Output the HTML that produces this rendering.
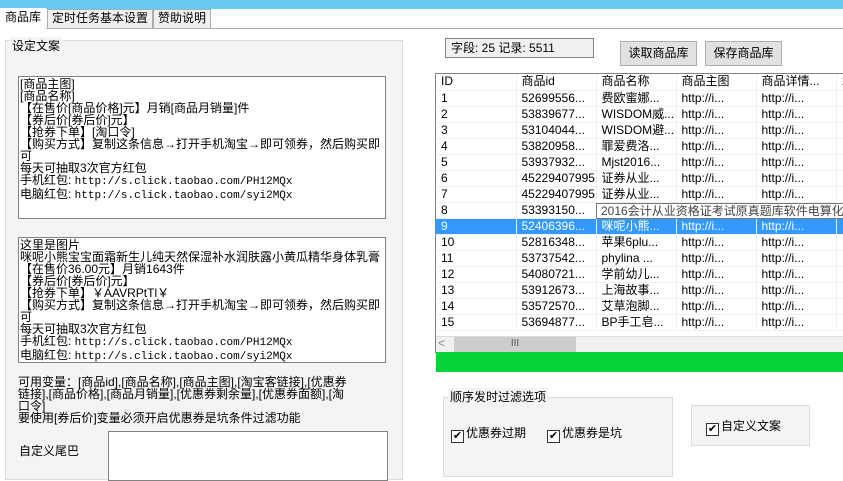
<!DOCTYPE html>
<html><head><meta charset="utf-8"><style>
*{margin:0;padding:0;box-sizing:border-box}
body{width:843px;height:474px;overflow:hidden;background:#fff;font-family:"Liberation Sans","Noto Sans CJK SC",sans-serif;font-size:12px;color:#000;position:relative}
.a{position:absolute}
.tb{top:9px;height:19px;border:1px solid #adadad;border-bottom:none;background:#f0f0f0;padding:0 4px;line-height:17px;font-size:12px}
.ta{background:#fff;border:1px solid #828282;line-height:12px;font-size:12px;padding:1px 1px;white-space:pre;overflow:hidden}
.m{font-family:"Liberation Mono",monospace;font-size:11px}
.btn{background:#e1e1e1;border:1px solid #adadad;text-align:center;line-height:23px;font-size:12px}
table{border-collapse:collapse;font-size:12px;table-layout:fixed;width:480px}
td{height:16px;width:80px;padding:0 0 0 5px;border-right:1px solid #f0f0f0;border-bottom:1px solid #f0f0f0;white-space:nowrap;overflow:hidden;line-height:15px}
.sel td{background:#3399ff;color:#fff}
.cb{display:inline-block;width:13px;height:13px;border:1px solid #333;background:#fff;font-size:11px;line-height:11px;text-align:center;vertical-align:-2px;margin-right:2px}
</style></head><body>
<div class="a" style="left:0;top:0;width:843px;height:9px;background:#6ac9ee"></div>
<div class="a" style="left:0;top:28px;width:843px;height:446px;background:#fff;border-top:1px solid #adadad"></div>
<div class="a tb" style="left:0;top:8px;height:21px;background:#fff;border-color:#fff">商品库</div>
<div class="a tb" style="left:47px">定时任务基本设置</div>
<div class="a tb" style="left:153px">赞助说明</div>

<div class="a" style="left:5px;top:40px;width:398px;height:440px;background:#f5f3f5;border:1px solid #dcdcdc"></div>
<div class="a" style="left:10px;top:37px;background:#f5f3f5;padding:0 2px">设定文案</div>
<div class="a ta" style="left:18px;top:76px;width:368px;height:143px">[商品主图]
[商品名称]
【在售价[商品价格]元】月销[商品月销量]件
【券后价[券后价]元】
【抢券下单】[淘口令]
【购买方式】复制这条信息→打开手机淘宝→即可领券，然后购买即
可
每天可抽取3次官方红包
手机红包: <span class="m">http://s.click.taobao.com/PH12MQx</span>
电脑红包: <span class="m">http://s.click.taobao.com/syi2MQx</span></div>
<div class="a ta" style="left:18px;top:237px;width:368px;height:126px">这里是图片
咪呢小熊宝宝面霜新生儿纯天然保湿补水润肤露小黄瓜精华身体乳膏
【在售价36.00元】月销1643件
【券后价[券后价]元】
【抢券下单】￥AAVRPtTl￥
【购买方式】复制这条信息→打开手机淘宝→即可领券，然后购买即
可
每天可抽取3次官方红包
手机红包: <span class="m">http://s.click.taobao.com/PH12MQx</span>
电脑红包: <span class="m">http://s.click.taobao.com/syi2MQx</span></div>
<div class="a" style="left:18px;top:376px;width:380px;line-height:12px;white-space:nowrap">可用变量：[商品id],[商品名称],[商品主图],[淘宝客链接],[优惠券<br>链接],[商品价格],[商品月销量],[优惠券剩余量],[优惠券面额],[淘<br>口令]<br>要使用[券后价]变量必须开启优惠券是坑条件过滤功能</div>
<div class="a" style="left:19px;top:442px">自定义尾巴</div>
<div class="a" style="left:108px;top:431px;width:280px;height:50px;background:#fff;border:1px solid #828282"></div>

<div class="a" style="left:445px;top:38px;width:149px;height:20px;border:1px solid #828282;background:#f0f0f0;padding-left:5px;line-height:18px">字段: 25 记录: 5511</div>
<div class="a btn" style="left:620px;top:41px;width:77px;height:25px">读取商品库</div>
<div class="a btn" style="left:705px;top:41px;width:77px;height:25px">保存商品库</div>

<div class="a" style="left:435px;top:73px;width:410px;height:280px;border:1px solid #828282;background:#fff;overflow:hidden">
<table>
<tr><td>ID</td><td>商品id</td><td>商品名称</td><td>商品主图</td><td>商品详情...</td><td>1</td></tr>
<tr><td>1</td><td>52699556...</td><td>费欧蜜娜...</td><td>http://i...</td><td>http://i...</td><td></td></tr>
<tr><td>2</td><td>53839677...</td><td>WISDOM威...</td><td>http://i...</td><td>http://i...</td><td></td></tr>
<tr><td>3</td><td>53104044...</td><td>WISDOM避...</td><td>http://i...</td><td>http://i...</td><td></td></tr>
<tr><td>4</td><td>53820958...</td><td>罪爱费洛...</td><td>http://i...</td><td>http://i...</td><td></td></tr>
<tr><td>5</td><td>53937932...</td><td>Mjst2016...</td><td>http://i...</td><td>http://i...</td><td></td></tr>
<tr><td>6</td><td>45229407995</td><td>证券从业...</td><td>http://i...</td><td>http://i...</td><td></td></tr>
<tr><td>7</td><td>45229407995</td><td>证券从业...</td><td>http://i...</td><td>http://i...</td><td></td></tr>
<tr><td>8</td><td>53393150...</td><td></td><td></td><td></td><td></td></tr>
<tr class="sel"><td>9</td><td>52406396...</td><td>咪呢小熊...</td><td>http://i...</td><td>http://i...</td><td></td></tr>
<tr><td>10</td><td>52816348...</td><td>苹果6plu...</td><td>http://i...</td><td>http://i...</td><td></td></tr>
<tr><td>11</td><td>53737542...</td><td>phylina ...</td><td>http://i...</td><td>http://i...</td><td></td></tr>
<tr><td>12</td><td>54080721...</td><td>学前幼儿...</td><td>http://i...</td><td>http://i...</td><td></td></tr>
<tr><td>13</td><td>53912673...</td><td>上海故事...</td><td>http://i...</td><td>http://i...</td><td></td></tr>
<tr><td>14</td><td>53572570...</td><td>艾草泡脚...</td><td>http://i...</td><td>http://i...</td><td></td></tr>
<tr><td>15</td><td>53694877...</td><td>BP手工皂...</td><td>http://i...</td><td>http://i...</td><td></td></tr>
</table>
<div class="a" style="left:0;top:262px;width:410px;height:17px;background:#f0f0f0;border-top:1px solid #ddd"></div>
<div class="a" style="left:2px;top:262px;color:#888">&lt;</div>
<div class="a" style="left:18px;top:263px;width:122px;height:15px;background:#cdcdcd;text-align:center;line-height:14px;font-size:10px;color:#555">III</div>
</div>
<div class="a" style="left:596px;top:203px;width:250px;height:16px;background:#fff;border:1px solid #767676;padding-left:4px;line-height:14px;color:#444;white-space:nowrap;overflow:hidden">2016会计从业资格证考试原真题库软件电算化</div>
<div class="a" style="left:436px;top:352px;width:407px;height:20px;background:#06d337"></div>

<div class="a" style="left:443px;top:397px;width:230px;height:80px;background:#f5f3f5;border:1px solid #dcdcdc"></div>
<div class="a" style="left:448px;top:388px;background:#f5f3f5;padding:0 2px">顺序发时过滤选项</div>
<div class="a" style="left:451px;top:424px"><span class="cb">✔</span>优惠券过期</div>
<div class="a" style="left:547px;top:424px"><span class="cb">✔</span>优惠券是坑</div>
<div class="a" style="left:691px;top:405px;width:119px;height:41px;background:#f5f3f5;border:1px solid #dcdcdc"></div>
<div class="a" style="left:706px;top:417px"><span class="cb">✔</span>自定义文案</div>
</body></html>
